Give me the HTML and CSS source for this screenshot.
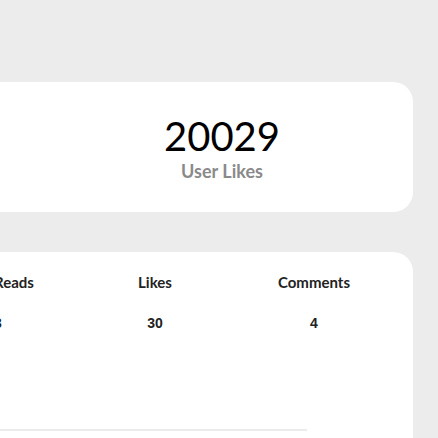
FILE: index.html
```html
<!DOCTYPE html>
<html lang="en">
<head>
<meta charset="utf-8">
<title>Dashboard</title>
<link rel="stylesheet" href="styles.css">
</head>
<body>
  <main class="page">
    <section class="card stat-card">
      <div class="stat-value">20029</div>
      <div class="stat-label">User Likes</div>
    </section>
    <section class="card table-card">
      <div class="stats-grid">
        <div class="th th-first">Reads</div>
        <div class="th">Likes</div>
        <div class="th">Comments</div>
        <div class="td td-first">3</div>
        <div class="td">30</div>
        <div class="td">4</div>
      </div>
      <div class="track"></div>
    </section>
  </main>
</body>
</html>
```

FILE: styles.css
```css
html, body {
  margin: 0;
  padding: 0;
  background: #ececec;
  overflow: hidden;
}

body {
  font-family: Lato, "Liberation Sans", sans-serif;
  color: #111;
}

.page {
  padding: 82px 25px 0 0;
  display: flex;
  flex-direction: column;
  gap: 40px;
}

.card {
  background: #fff;
  border-radius: 20px;
  margin-left: -40px;
}

.stat-card {
  display: flex;
  flex-direction: column;
  align-items: center;
  padding: 30px 0 30px 71px;
}

.stat-value {
  font-size: 40px;
  font-weight: 400;
  line-height: normal;
  color: #000;
}

.stat-label {
  font-size: 18px;
  font-weight: 700;
  line-height: normal;
  color: #8a8a8a;
}

.table-card {
  padding: 21px 15px 40px 34px;
}

.stats-grid {
  display: grid;
  grid-template-columns: 86px 150px 168px;
  row-gap: 24px;
}

.th {
  font-family: Lato, sans-serif;
  font-weight: 700;
  font-size: 15px;
  line-height: normal;
  color: #222;
  text-align: center;
}

.td {
  font-family: "Liberation Sans", Arial, sans-serif;
  font-size: 14px;
  font-weight: 700;
  line-height: normal;
  color: #222;
  text-align: center;
}

.th-first, .td-first {
  text-align: left;
}

.track {
  margin-top: 98px;
  width: 313px;
  height: 2px;
  background: #ececec;
}
```
